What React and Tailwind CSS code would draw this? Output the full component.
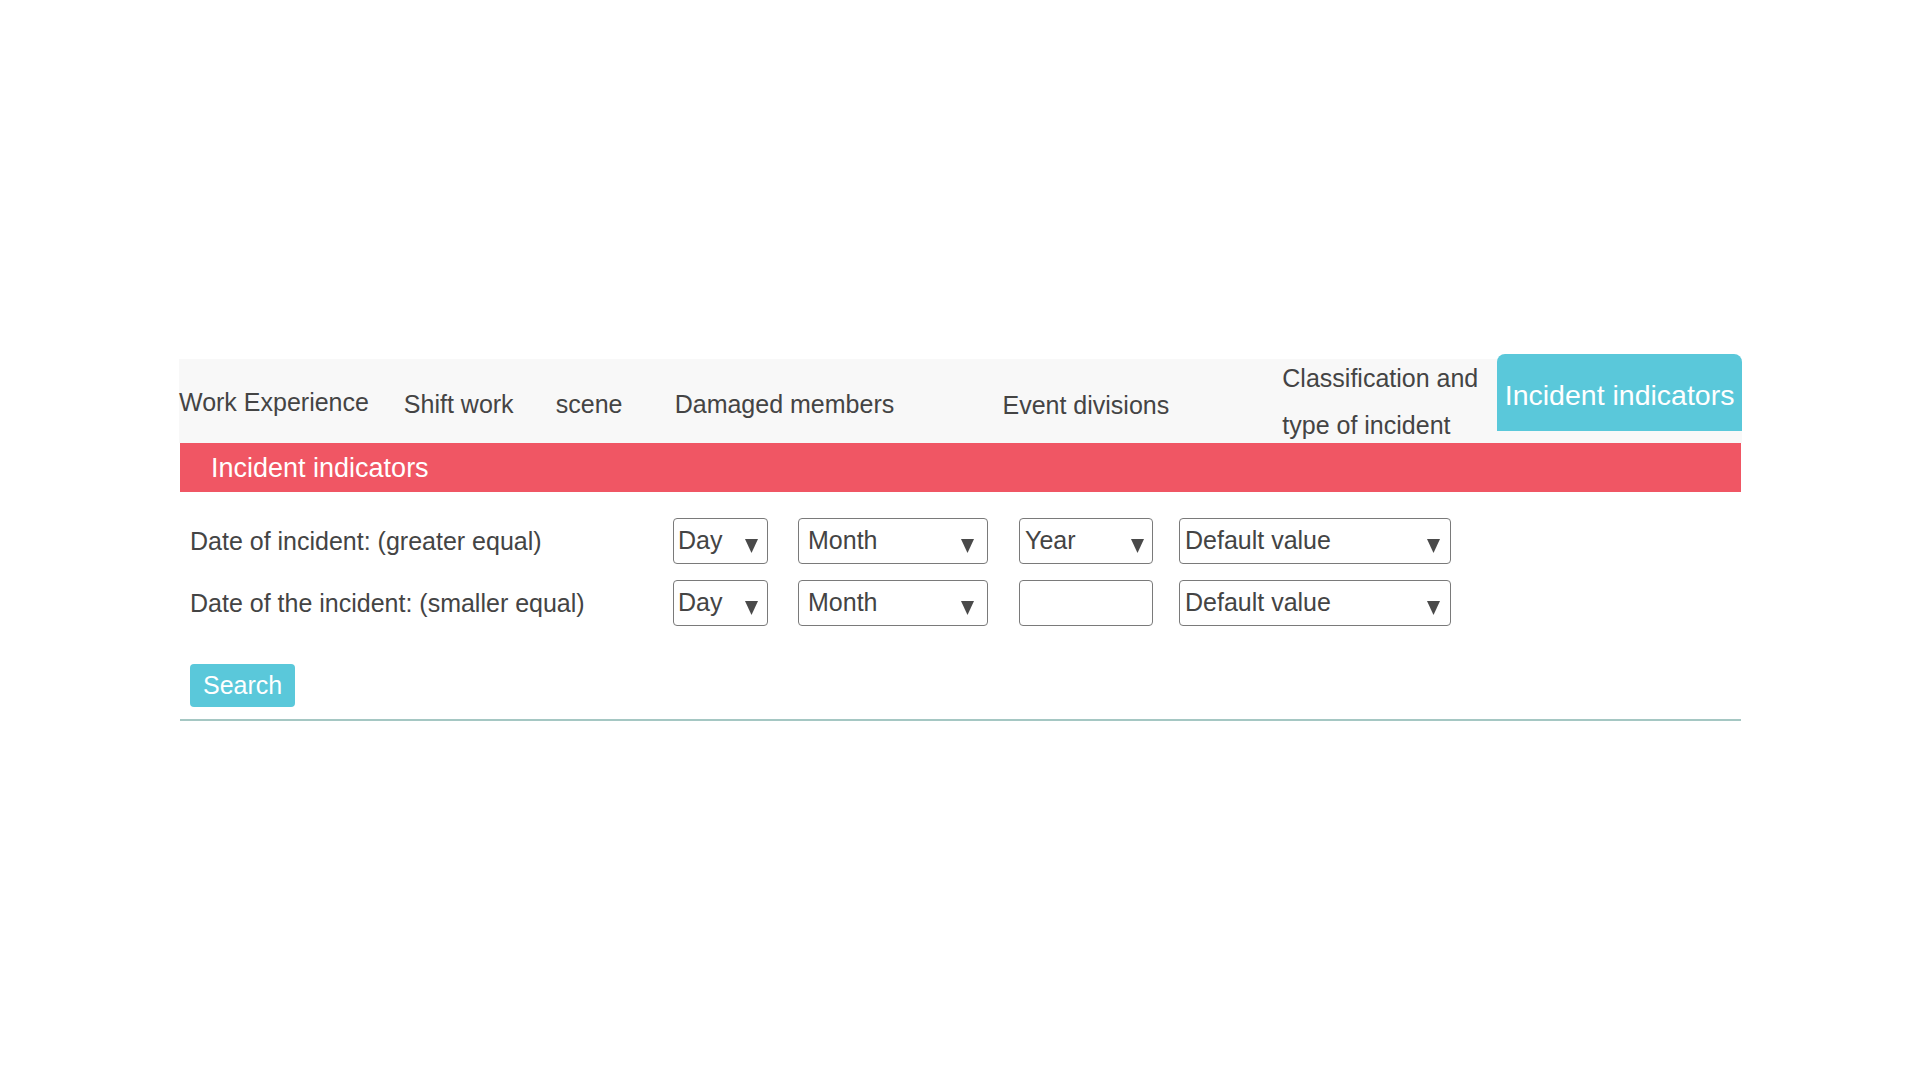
import React from "react";

// Down arrow used inside the select boxes
const Arrow = () => (
  <svg width="13" height="14" viewBox="0 0 13 14" className="mt-[10px] shrink-0">
    <path d="M0 0 H13 L6.5 14 Z" fill="#4a4a4a" />
  </svg>
);

const SelectBox = ({ text, className, textClass, arrowClass }) => (
  <div
    className={`h-[46px] flex items-center justify-between border border-[#7a7a7a] rounded-[4px] bg-white ${className}`}
  >
    <span className={textClass}>{text}</span>
    {text ? (
      <span className={arrowClass}>
        <Arrow />
      </span>
    ) : null}
  </div>
);

const tabs = [
  { label: "Work Experience", w: "w-[225px]", extra: "pt-[3px]" },
  { label: "Shift work", w: "w-[152px]", extra: "pt-[7px]" },
  { label: "scene", w: "w-[119px]", extra: "pt-[7px]" },
  { label: "Damaged members", w: "w-[328px]", extra: "pt-[7px]" },
  { label: "Event divisions", w: "w-[280px]", extra: "pt-[9px]" },
];

export default function App() {
  return (
    <div
      className="min-h-screen bg-white text-[#444] pt-[359px]"
      style={{ fontFamily: '"Liberation Sans", Arial, sans-serif' }}
    >
      <div className="w-[1563px] ml-[179px]">
        {/* Tabs */}
        <div className="flex h-[84px] bg-[#f8f8f8] text-[25px]">
          {tabs.map((t) => (
            <div key={t.label} className={`${t.w} ${t.extra} flex items-center whitespace-nowrap`}>
              {t.label}
            </div>
          ))}
          <div className="w-[215px] flex items-center leading-[47px] pt-[1px]">
            <div>
              Classification and
              <br />
              type of incident
            </div>
          </div>
          <div className="w-[245px] h-[77px] -mt-[5px] self-start rounded-t-[8px] bg-[#5ac8da] text-white text-[28.5px] flex items-center justify-center whitespace-nowrap pt-[6px]">
            Incident indicators
          </div>
        </div>

        {/* Section header */}
        <div className="h-[49px] ml-[1px] mr-[1px] bg-[#f05664] text-white text-[27px] flex items-center pl-[31px] pt-[2px]">
          Incident indicators
        </div>

        {/* Form */}
        <div className="pl-[11px] pt-[26px] text-[25px]">
          <div className="flex items-center">
            <div className="w-[483px] pt-[1px]">Date of incident: (greater equal)</div>
            <SelectBox text="Day" className="w-[95px]" textClass="pl-[4px]" arrowClass="pr-[9px]" />
            <SelectBox text="Month" className="w-[190px] ml-[30px]" textClass="pl-[9px]" arrowClass="pr-[13px]" />
            <SelectBox text="Year" className="w-[134px] ml-[31px]" textClass="pl-[5px]" arrowClass="pr-[8px]" />
            <SelectBox text="Default value" className="w-[272px] ml-[26px]" textClass="pl-[5px]" arrowClass="pr-[10px]" />
          </div>
          <div className="flex items-center mt-[16px]">
            <div className="w-[483px] pt-[1px]">Date of the incident: (smaller equal)</div>
            <SelectBox text="Day" className="w-[95px]" textClass="pl-[4px]" arrowClass="pr-[9px]" />
            <SelectBox text="Month" className="w-[190px] ml-[30px]" textClass="pl-[9px]" arrowClass="pr-[13px]" />
            <SelectBox text="" className="w-[134px] ml-[31px]" textClass="" arrowClass="" />
            <SelectBox text="Default value" className="w-[272px] ml-[26px]" textClass="pl-[5px]" arrowClass="pr-[10px]" />
          </div>

          <button className="mt-[38px] h-[43px] px-[13px] rounded-[4px] bg-[#5ac8da] text-white text-[25px] leading-none">
            Search
          </button>
        </div>

        {/* Bottom rule */}
        <div className="mt-[12px] ml-[1px] mr-[1px] h-[2px] bg-[#a5c7c3]" />
      </div>
    </div>
  );
}
